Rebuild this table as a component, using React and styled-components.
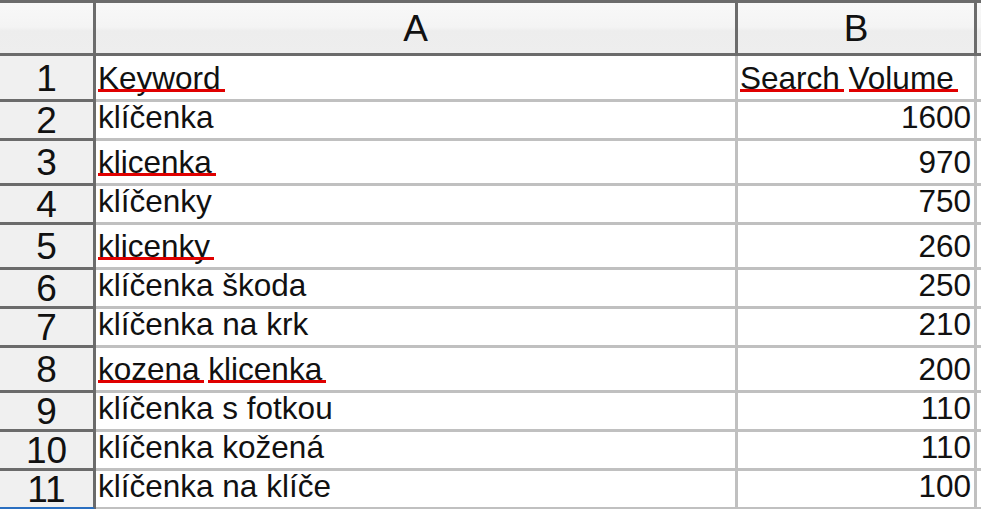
import React from 'react'
import styled, { createGlobalStyle } from 'styled-components'

const GlobalStyle = createGlobalStyle`
  html, body {
    margin: 0;
    padding: 0;
    background: #fff;
  }
  body {
    font-family: "Liberation Sans", Arial, sans-serif;
    color: #111;
  }
`

const DARK = '#6b6b6b'
const LIGHT = '#c0c0c0'
const COLS = '96px 642px 239px 1fr'

// words the spell checker flags
const misspelled = ['Keyword', 'klicenka', 'klicenky', 'kozena', 'Search', 'Volume']

const rows = [
  { keyword: 'Keyword', volume: 'Search Volume', isHeader: true },
  { keyword: 'klíčenka', volume: '1600' },
  { keyword: 'klicenka', volume: '970' },
  { keyword: 'klíčenky', volume: '750' },
  { keyword: 'klicenky', volume: '260' },
  { keyword: 'klíčenka škoda', volume: '250' },
  { keyword: 'klíčenka na krk', volume: '210' },
  { keyword: 'kozena klicenka', volume: '200' },
  { keyword: 'klíčenka s fotkou', volume: '110' },
  { keyword: 'klíčenka kožená', volume: '110' },
  { keyword: 'klíčenka na klíče', volume: '100' },
]

const Sheet = styled.div`
  display: flex;
  flex-direction: column;
  width: 100%;
  height: 509px;
  overflow: hidden;
  border-top: 3px solid ${DARK};
  box-sizing: border-box;
`

const Row = styled.div`
  display: grid;
  grid-template-columns: ${COLS};
  grid-template-rows: ${p => p.$h}px;
  height: ${p => p.$h}px;
  flex: none;
`

const HeadCell = styled.div`
  box-sizing: border-box;
  display: flex;
  align-items: center;
  justify-content: center;
  padding-top: 1px;
  background: linear-gradient(to bottom, #f8f8f8 0%, #f4f4f4 48%, #ededed 56%, #eeeeee 100%);
  border-right: ${p => (p.$last ? 'none' : `3px solid ${DARK}`)};
  border-bottom: 3px solid ${DARK};
  font-size: 37px;
  line-height: 30px;
  color: #111;
`

const RowHead = styled.div`
  box-sizing: border-box;
  display: flex;
  align-items: center;
  justify-content: center;
  padding-top: 2px;
  background: #f0f0f0;
  border-right: 3px solid ${DARK};
  border-bottom: 3px solid ${p => (p.$selected ? '#2a6fc0' : DARK)};
  font-size: 37px;
  line-height: 30px;
`

const Cell = styled.div`
  box-sizing: border-box;
  display: flex;
  align-items: flex-end;
  justify-content: ${p => (p.$right ? 'flex-end' : 'flex-start')};
  padding: 0 3px 7px 2px;
  background: #fff;
  border-right: ${p => (p.$last ? 'none' : `3px solid ${LIGHT}`)};
  border-bottom: 3px solid ${LIGHT};
  font-size: 31.5px;
  line-height: 28px;
`

const Text = styled.span`
  white-space: pre;
`

const Flagged = styled.span`
  position: relative;
  &::after {
    content: '';
    position: absolute;
    left: 0;
    right: -4px;
    bottom: 4px;
    height: 3px;
    background: #e00000;
  }
`

const Words = ({ text }) => {
  const parts = text.split(' ')
  return (
    <Text>
      {parts.map((w, i) => (
        <React.Fragment key={i}>
          {misspelled.includes(w) ? <Flagged>{w}</Flagged> : w}
          {i < parts.length - 1 ? ' ' : ''}
        </React.Fragment>
      ))}
    </Text>
  )
}

export default function App() {
  return (
    <>
      <GlobalStyle />
      <Sheet>
        <Row $h={53}>
          <HeadCell />
          <HeadCell>A</HeadCell>
          <HeadCell>B</HeadCell>
          <HeadCell $last />
        </Row>
        {rows.map((r, i) => {
          const tall = r.isHeader || r.keyword.split(' ').some(w => misspelled.includes(w))
          const h = r.isHeader ? 46 : tall ? 45 : 39
          return (
            <Row key={i} $h={h}>
              <RowHead $selected={i === rows.length - 1}>{i + 1}</RowHead>
              <Cell>
                <Words text={r.keyword} />
              </Cell>
              <Cell $right={!r.isHeader}>
                <Words text={r.volume} />
              </Cell>
              <Cell $last />
            </Row>
          )
        })}
      </Sheet>
    </>
  )
}
